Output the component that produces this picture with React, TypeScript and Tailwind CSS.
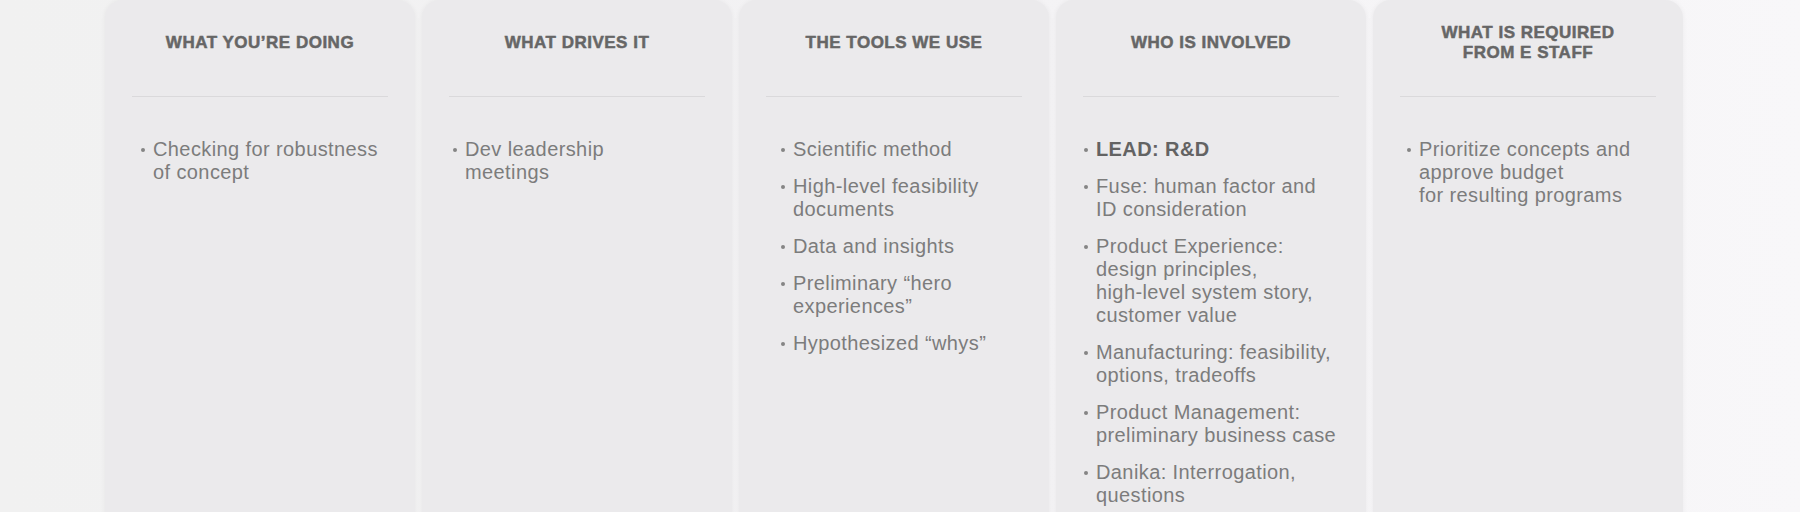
import React from "react";

type Item = { lines: string[]; bold?: boolean };
type Col = { title: string[]; pad: string; items: Item[] };

const cols: Col[] = [
  {
    title: ["WHAT YOU\u2019RE DOING"],
    pad: "pl-[36px]",
    items: [{ lines: ["Checking for robustness", "of concept"] }],
  },
  {
    title: ["WHAT DRIVES IT"],
    pad: "pl-[31px]",
    items: [{ lines: ["Dev leadership", "meetings"] }],
  },
  {
    title: ["THE TOOLS WE USE"],
    pad: "pl-[42px]",
    items: [
      { lines: ["Scientific method"] },
      { lines: ["High-level feasibility", "documents"] },
      { lines: ["Data and insights"] },
      { lines: ["Preliminary \u201chero", "experiences\u201d"] },
      { lines: ["Hypothesized \u201cwhys\u201d"] },
    ],
  },
  {
    title: ["WHO IS INVOLVED"],
    pad: "pl-[28px]",
    items: [
      { lines: ["LEAD: R&D"], bold: true },
      { lines: ["Fuse: human factor and", "ID consideration"] },
      {
        lines: [
          "Product Experience:",
          "design principles,",
          "high-level system story,",
          "customer value",
        ],
      },
      { lines: ["Manufacturing: feasibility,", "options, tradeoffs"] },
      { lines: ["Product Management:", "preliminary business case"] },
      { lines: ["Danika: Interrogation,", "questions"] },
    ],
  },
  {
    title: ["WHAT IS REQUIRED", "FROM E STAFF"],
    pad: "pl-[34px]",
    items: [
      {
        lines: [
          "Prioritize concepts and",
          "approve budget",
          "for resulting programs",
        ],
      },
    ],
  },
];

export default function App() {
  return (
    <div
      className="h-[512px] w-[1800px] overflow-hidden bg-gradient-to-r from-[#f1f1f1] via-[#f3f2f4] to-[#f8f7f9]"
      style={{ fontFamily: '"Liberation Sans", Arial, sans-serif' }}
    >
      <div className="flex h-full gap-[7px] pl-[105px]">
        {cols.map((c, i) => (
          <div
            key={i}
            className="flex h-[560px] w-[310px] flex-col rounded-t-[18px] bg-[#ebeaec] shadow-[0_0_5px_rgba(0,0,0,0.05)]"
          >
            <div className="flex h-[83px] items-center justify-center pt-[2px]">
              <div className="text-center text-[17px] font-bold leading-[20px] tracking-[0.5px] text-[#666666] [-webkit-text-stroke:0.5px_#666666]">
                {c.title.map((t, j) => (
                  <div key={j}>{t}</div>
                ))}
              </div>
            </div>
            <div className="mx-[27px] mt-[13px] h-px bg-[#dad9db]" />
            <div className={`mt-[41px] flex flex-col gap-[14px] ${c.pad}`}>
              {c.items.map((it, k) => (
                <div key={k} className="flex">
                  <div className="w-[12px] shrink-0 pt-[10px]">
                    <div className="h-[4px] w-[4px] rounded-full bg-[#858585]" />
                  </div>
                  <div
                    className={`whitespace-nowrap text-[20px] leading-[23px] tracking-[0.4px] ${
                      it.bold ? "font-bold text-[#636363]" : "text-[#7c7c7c]"
                    }`}
                  >
                    {it.lines.map((l, m) => (
                      <div key={m}>{l}</div>
                    ))}
                  </div>
                </div>
              ))}
            </div>
          </div>
        ))}
      </div>
    </div>
  );
}
